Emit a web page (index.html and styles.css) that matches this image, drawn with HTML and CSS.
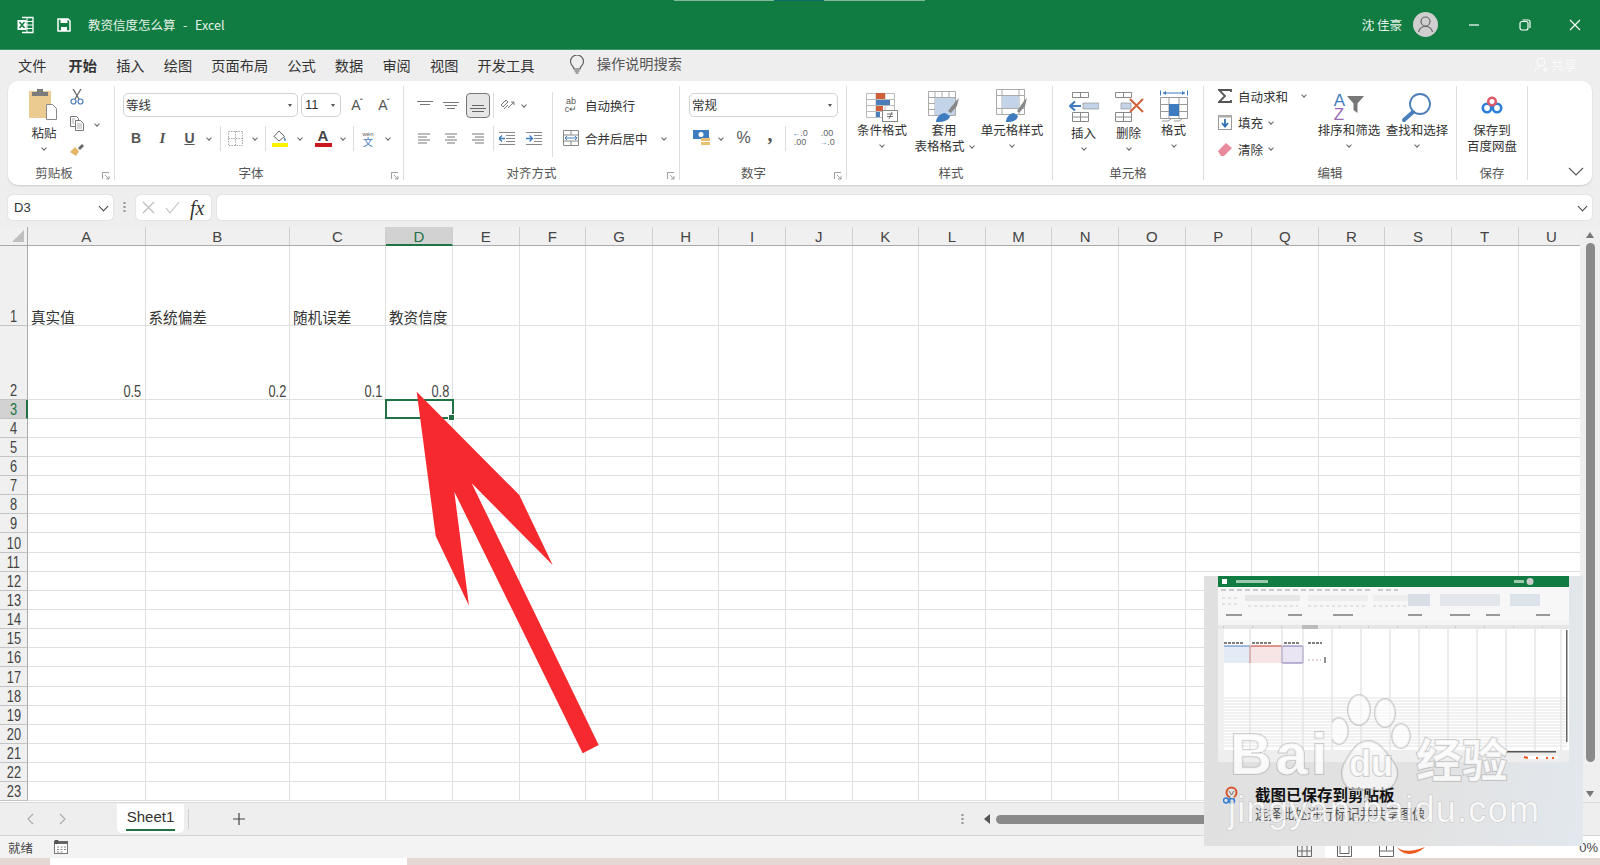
FILE: index.html
```html
<!DOCTYPE html>
<html lang="zh-CN">
<head>
    <meta charset="UTF-8">
    <title>教资信度怎么算 - Excel</title>
    <link rel="stylesheet" href="styles.css">
</head>
<body>
    <header class="titlebar">
        <svg class="logo" width="17" height="18" viewBox="0 0 17 18"><path d="M5 1.500h11v15H5" fill="none" stroke="#fff" stroke-width="1.300"/><path d="M10 1.500v15M5 5.500h11M5 9h11M5 12.500h11" stroke="#fff" stroke-width="1"/><rect x="0.500" y="4" width="9" height="10" fill="#fff"/><path d="M2.500 6l5 6M7.500 6l-5 6" stroke="#107c41" stroke-width="1.500"/></svg>
        <svg class="save" width="14" height="14" viewBox="0 0 14 14"><path d="M1 1h10l2 2v10H1z" fill="none" stroke="#fff" stroke-width="1.500"/><rect x="3.500" y="1" width="7" height="4" fill="#fff"/><rect x="4" y="9" width="6" height="4" fill="#fff"/></svg>
        <span class="doc">教资信度怎么算&nbsp; -&nbsp; Excel</span>
        <span class="top-line"><i></i></span>
        <span class="user">沈 佳豪</span>
        <span class="avatar"><svg width="25" height="25" viewBox="0 0 25 25"><circle cx="12.500" cy="9.500" r="4.500" fill="none" stroke="#666" stroke-width="1.200"/><path d="M5.500 20c1-4 4-5.500 7-5.500s6 1.500 7 5.500" fill="none" stroke="#666" stroke-width="1.200"/></svg></span>
        <span class="win win-min"><svg width="12" height="12" viewBox="0 0 12 12"><path d="M1 6h10" stroke="#fff" stroke-width="1.200"/></svg></span>
        <span class="win win-max"><svg width="12" height="12" viewBox="0 0 12 12"><rect x="1" y="2.500" width="8" height="8.500" rx="2" fill="none" stroke="#fff" stroke-width="1.200"/><path d="M3.500 1H9a2 2 0 0 1 2 2v6" fill="none" stroke="#fff" stroke-width="1.200"/></svg></span>
        <span class="win win-close"><svg width="12" height="12" viewBox="0 0 12 12"><path d="M1 1l10 10M11 1L1 11" stroke="#fff" stroke-width="1.200"/></svg></span>
    </header>

    <nav class="tabs">
        <span>文件</span>
        <span class="active">开始</span>
        <span>插入</span>
        <span>绘图</span>
        <span>页面布局</span>
        <span>公式</span>
        <span>数据</span>
        <span>审阅</span>
        <span>视图</span>
        <span>开发工具</span>
        <svg class="bulb" width="16" height="20" viewBox="0 0 16 20"><path d="M5 14c0-2.500-3.500-3.500-3.500-7.500a6.500 6.500 0 0 1 13 0C14.500 10.500 11 11.500 11 14z" fill="none" stroke="#555" stroke-width="1.100"/><path d="M5.500 16h5M6.500 18h3" stroke="#555" stroke-width="1.100"/></svg>
        <span class="search">操作说明搜索</span>
        <span class="share">
            <svg width="16" height="16" viewBox="0 0 16 16"><circle cx="7" cy="5" r="4" fill="none" stroke="#fff"/><path d="M1 15c0-4 3-5 6-5M11 10v5M8.500 12.500h5" fill="none" stroke="#fff"/></svg>
            共享
        </span>
    </nav>

    <section class="ribbon">
        <div class="group g-clip">
            <div class="gbody">
                <div class="big paste">
                    <svg width="30" height="33" viewBox="0 0 30 33"><rect y="2" width="22" height="27" rx="1" fill="#eccb90"/><path d="M3 3h16v4H3z" fill="#7c7c7c"/><rect x="8" width="6" height="4" fill="#7c7c7c"/><path d="M17.500 15.500h6l4 4v11h-10z" fill="#fff" stroke="#888"/></svg>
                    <span class="lbl">粘贴</span>
                    <i class="chev"></i>
                </div>
                <div class="stack clip-tools">
                    <div class="line">
                        <svg width="14" height="16" viewBox="0 0 14 16"><path d="M3 0l6 10M11 0L5 10" stroke="#666" stroke-width="1.300"/><circle cx="3.500" cy="12.500" r="2.500" fill="none" stroke="#4a7ebb" stroke-width="1.200"/><circle cx="10.500" cy="12.500" r="2.500" fill="none" stroke="#4a7ebb" stroke-width="1.200"/></svg>
                    </div>
                    <div class="line">
                        <svg width="14" height="15" viewBox="0 0 14 15"><path d="M.500.500h6l2 2v8H.500z" fill="#fff" stroke="#777"/><path d="M5.500 4.500h5l3 3v7h-8z" fill="#fff" stroke="#777"/><path d="M2 3h3M2 5h2M2 7h2M7 8h5M7 10h5M7 12h5" stroke="#999" stroke-width=".8"/></svg>
                        <i class="chev chev-copy"></i>
                    </div>
                    <div class="line">
                        <svg width="14" height="13" viewBox="0 0 14 13"><path d="M0 8l5-5 4 4-3 5z" fill="#e3b766"/><path d="M8 4l4-4 2 2-4 4z" fill="#666"/></svg>
                    </div>
                </div>
            </div>
            <div class="glabel">剪贴板</div>
            <svg class="launch" width="8" height="8" viewBox="0 0 8 8"><path d="M.500 7V.500H7M3 3l4 4M7 4v3H4" fill="none" stroke="#888" stroke-width=".8"/></svg>
        </div>

        <div class="group g-font">
            <div class="gbody rows">
                <div class="row">
                    <div class="combo font-name">等线<i class="caret"></i></div>
                    <div class="combo font-size">11<i class="caret"></i></div>
                    <span class="box w32 glyph">A<sup>ˆ</sup></span>
                    <span class="box w22 glyph">A<sup>ˇ</sup></span>
                </div>
                <div class="row">
                    <span class="box w26 fmt bold">B</span>
                    <span class="box w27 fmt ital">I</span>
                    <span class="box w27 fmt under">U</span>
                    <span class="box w12"><i class="chev"></i></span>
                    <span class="box w10"><i class="sep"></i></span>
                    <span class="box w20">
                        <svg width="15" height="15" viewBox="0 0 15 15"><path d="M.500.500h14v14H.500zM7.500.500v14M.500 7.500h14" fill="none" stroke="#aaa" stroke-dasharray="1.500 1"/></svg>
                    </span>
                    <span class="box w20"><i class="chev"></i></span>
                    <span class="box w1"><i class="sep"></i></span>
                    <span class="box w28">
                        <svg width="16" height="17" viewBox="0 0 16 17"><path d="M7 1l5.500 5.500L7 11 2 6.500z" fill="#fff" stroke="#666"/><path d="M12 7c1 1 2 2 2 3a1 1 0 0 1-2 0z" fill="#5b8fc9"/><rect y="13" width="16" height="4" fill="#fff200"/></svg>
                    </span>
                    <span class="box w12"><i class="chev"></i></span>
                    <span class="box w34 fontcolor">A<i></i></span>
                    <span class="box w6"><i class="chev"></i></span>
                    <span class="box w14"><i class="sep"></i></span>
                    <span class="box w16 wen"><small>wén</small>文</span>
                    <span class="box w24"><i class="chev"></i></span>
                </div>
            </div>
            <div class="glabel">字体</div>
            <svg class="launch" width="8" height="8" viewBox="0 0 8 8"><path d="M.500 7V.500H7M3 3l4 4M7 4v3H4" fill="none" stroke="#888" stroke-width=".8"/></svg>
        </div>

        <div class="group g-align">
            <div class="gbody">
                <div class="rows align-left">
                    <div class="row">
                        <span class="box w26"><svg width="16" height="9" viewBox="0 0 16 9"><path d="M0 .500h16M3 3.500h10" stroke="#777"/></svg></span>
                        <span class="box w26"><svg width="16" height="9" viewBox="0 0 16 9"><path d="M0 1.500h16M2 4.500h12M4 7.500h8" stroke="#777"/></svg></span>
                        <span class="box w24 pressed"><svg width="16" height="9" viewBox="0 0 16 9"><path d="M2 1.500h12M0 4.500h16M2 7.500h12" stroke="#666"/></svg></span>
                        <span class="box w6"><i class="sep"></i></span>
                        <span class="box w22">
                            <svg width="16" height="14" viewBox="0 0 16 14"><path d="M2 7l5-5 2 2-5 5zM5 11l4-4" fill="none" stroke="#777"/><path d="M9 10l6-6m-3 0h3v3" fill="none" stroke="#777"/></svg>
                        </span>
                        <span class="box w12"><i class="chev"></i></span>
                    </div>
                    <div class="row">
                        <span class="box w24"><svg width="12" height="11" viewBox="0 0 12 11"><path d="M0 1h12M0 4h9M0 7h12M0 10h9" stroke="#777"/></svg></span>
                        <span class="box w30"><svg width="12" height="11" viewBox="0 0 12 11"><path d="M0 1h12M2 4h8M0 7h12M2 10h8" stroke="#777"/></svg></span>
                        <span class="box w24"><svg width="12" height="11" viewBox="0 0 12 11"><path d="M0 1h12M3 4h9M0 7h12M3 10h9" stroke="#777"/></svg></span>
                        <span class="box w6"><i class="sep"></i></span>
                        <span class="box w22"><svg width="16" height="13" viewBox="0 0 16 13"><path d="M0 .500h16M7 3.500h9M7 6.500h9M7 9.500h9M0 12.500h16" stroke="#888"/><path d="M0 6.500h6M3 3.500l-3 3 3 3" fill="none" stroke="#3f7cbf" stroke-width="1.300"/></svg></span>
                        <span class="box w32"><svg width="16" height="13" viewBox="0 0 16 13"><path d="M0 .500h16M8 3.500h8M8 6.500h8M8 9.500h8M0 12.500h16" stroke="#888"/><path d="M0 6.500h6M3.500 3.500l3 3-3 3" fill="none" stroke="#3f7cbf" stroke-width="1.300"/></svg></span>
                    </div>
                </div>
                <i class="vsep"></i>
                <div class="rows align-right">
                    <div class="row">
                        <span class="box w16 wrapico">ab<br>c↵</span>
                        <span class="txt">自动换行</span>
                    </div>
                    <div class="row">
                        <span class="box w16"><svg width="16" height="16" viewBox="0 0 16 16"><path d="M.500.500h15v15H.500zM.500 5h15M.500 11h15M8 .500V5M8 11v4.500" fill="none" stroke="#888"/><path d="M2 8h12M4 6l-2 2 2 2M12 6l2 2-2 2" fill="none" stroke="#3f7cbf"/></svg></span>
                        <span class="txt">合并后居中</span>
                        <i class="chev chev-merge"></i>
                    </div>
                </div>
            </div>
            <div class="glabel">对齐方式</div>
            <svg class="launch" width="8" height="8" viewBox="0 0 8 8"><path d="M.500 7V.500H7M3 3l4 4M7 4v3H4" fill="none" stroke="#888" stroke-width=".8"/></svg>
        </div>

        <div class="group g-num">
            <div class="gbody rows">
                <div class="row">
                    <div class="combo num-format">常规<i class="caret"></i></div>
                </div>
                <div class="row">
                    <span class="box w24"><svg width="17" height="16" viewBox="0 0 17 16"><rect width="16" height="9" fill="#3f7cbf"/><circle cx="8" cy="4.500" r="2.500" fill="#fff"/><rect x="8" y="8" width="9" height="3" fill="#e9c070"/><rect x="8" y="12" width="9" height="3" fill="#e9c070"/></svg></span>
                    <span class="box w16"><i class="chev"></i></span>
                    <span class="box w29 pct">%</span>
                    <span class="box w24 comma">,</span>
                    <span class="box w6"><i class="sep"></i></span>
                    <span class="box w24 dec"><span><b>←</b>.0</span><span>.00</span></span>
                    <span class="box w30 dec"><span>.00</span><span><b>→</b>.0</span></span>
                </div>
            </div>
            <div class="glabel">数字</div>
            <svg class="launch" width="8" height="8" viewBox="0 0 8 8"><path d="M.500 7V.500H7M3 3l4 4M7 4v3H4" fill="none" stroke="#888" stroke-width=".8"/></svg>
        </div>

        <div class="group g-style">
            <div class="gbody">
                <div class="big w64">
                    <div class="bigico">
                        <svg width="32" height="29" viewBox="0 0 32 29"><path d="M.500.500h28v24H.500zM.500 6.500h28M.500 12.500h28M.500 18.500h28M10 .500v24M19 .500v24" fill="none" stroke="#bbb"/><rect x="10" width="9" height="6" fill="#d0603c"/><rect x="10" y="7" width="14" height="5" fill="#4a7ebb"/><rect x="10" y="13" width="7" height="5" fill="#d0603c"/><rect x="10" y="19" width="4" height="5" fill="#4a7ebb"/><rect x="16.500" y="17.500" width="15" height="11" fill="#fff" stroke="#888"/><path d="M21 23.500h6M21 21h6M26 19l-3 7" stroke="#555" stroke-width=".8"/></svg>
                    </div>
                    <span class="lbl">条件格式</span>
                    <i class="chev"></i>
                </div>
                <div class="big w60">
                    <div class="bigico">
                        <svg width="32" height="31" viewBox="0 0 32 31"><path d="M.500.500h27v24H.500zM.500 6.500h27M.500 12.500h27M.500 18.500h27M7 .500v24M14 .500v24M21 .500v24" fill="none" stroke="#aaa"/><rect x="7" y="7" width="20" height="17" fill="#c3d3e8"/><path d="M20 20l8-10 3-3-2 8-6 7z" fill="#888"/><path d="M8 31c0-5 5-9 9-9l5 3c-1 4-5 6-14 6z" fill="#3f7cbf"/></svg>
                    </div>
                    <span class="lbl">套用</span>
                    <span class="lbl">表格格式<i class="chev chev-in"></i></span>
                </div>
                <div class="big w76">
                    <div class="bigico">
                        <svg width="32" height="33" viewBox="0 0 32 33"><path d="M.500.500h28v25H.500zM.500 6.500h28M.500 19.500h28M6 .500v25M23 .500v25" fill="none" stroke="#aaa"/><rect x="6" y="7" width="17" height="12" fill="#c3d3e8"/><path d="M21 22l7-10 3-3-2 8-6 7z" fill="#888"/><path d="M10 33c0-5 4-9 8-9l4 3c-1 4-4 6-12 6z" fill="#3f7cbf"/></svg>
                    </div>
                    <span class="lbl">单元格样式</span>
                    <i class="chev"></i>
                </div>
            </div>
            <div class="glabel">样式</div>
        </div>

        <div class="group g-cells">
            <div class="gbody">
                <div class="big w45 low">
                    <div class="bigico">
                        <svg width="30" height="30" viewBox="0 0 30 30"><path d="M3.500.500h16v5h-16zM11.500.500v5M3.500 20.500h16v9h-16zM3.500 25h16M11.500 20.500v9" fill="none" stroke="#888"/><rect x="14" y="11" width="16" height="6" fill="#c3d3e8" stroke="#888" stroke-width=".6"/><path d="M12 14H1M6 9.500L1 14l5 4.500" fill="none" stroke="#3f7cbf" stroke-width="2.200"/></svg>
                    </div>
                    <span class="lbl">插入</span>
                    <i class="chev"></i>
                </div>
                <div class="big w45 low">
                    <div class="bigico">
                        <svg width="30" height="30" viewBox="0 0 30 30"><path d="M1.500.500h16v5h-16zM9.500.500v5M1.500 20.500h16v9h-16zM1.500 25h16M9.500 20.500v9" fill="none" stroke="#888"/><rect x="7" y="11" width="10" height="6" fill="#c3d3e8" stroke="#888" stroke-width=".6"/><path d="M16 7l13 13M29 7L16 20" stroke="#d0603c" stroke-width="2"/></svg>
                    </div>
                    <span class="lbl">删除</span>
                    <i class="chev"></i>
                </div>
                <div class="big w45">
                    <div class="bigico">
                        <svg width="28" height="32" viewBox="0 0 28 32"><path d="M3 3h22" stroke="#3f7cbf"/><path d="M3 3l3-2v4zM25 3l-3-2v4z" fill="#3f7cbf"/><path d="M.500.500v5M27.500.500v5" stroke="#3f7cbf"/><path d="M.500 7.500h27v21H.500zM9 7.500v21M19 7.500v21M.500 14.500h27M.500 21.500h27" fill="none" stroke="#999"/><rect x="9" y="14" width="10" height="12" fill="#3f7cbf"/><path d="M2 31h6l3-2M14 31h5l3-2" fill="none" stroke="#999"/></svg>
                    </div>
                    <span class="lbl">格式</span>
                    <i class="chev"></i>
                </div>
            </div>
            <div class="glabel">单元格</div>
        </div>

        <div class="group g-edit">
            <div class="gbody">
                <div class="stack edit-tools">
                    <div class="line">
                        <svg width="14" height="14" viewBox="0 0 14 14"><path d="M13 3V1H1l6 6-6 6h12v-2" fill="none" stroke="#555" stroke-width="1.800"/></svg>
                        <span class="txt">自动求和</span>
                        <i class="chev chev-sum"></i>
                    </div>
                    <div class="line">
                        <svg width="14" height="15" viewBox="0 0 14 15"><rect x=".5" y=".5" width="13" height="14" fill="#fff" stroke="#999"/><rect width="14" height="2.500" fill="#aaa"/><path d="M7 4v7M4 8l3 3.500L10 8" fill="none" stroke="#2f6fb5" stroke-width="1.800"/></svg>
                        <span class="txt">填充</span>
                        <i class="chev"></i>
                    </div>
                    <div class="line">
                        <svg width="14" height="13" viewBox="0 0 14 13"><path d="M0 8l8-8 6 5-8 8H3z" fill="#e88a9b"/></svg>
                        <span class="txt">清除</span>
                        <i class="chev"></i>
                    </div>
                </div>
                <div class="big w68">
                    <div class="bigico sortico">
                        <span class="az"><em class="az-a">A</em><em class="az-z">Z</em></span>
                        <svg width="17" height="17" viewBox="0 0 17 17"><path d="M0 0h17l-6.500 7.500V17l-4-3V7.500z" fill="#777"/></svg>
                    </div>
                    <span class="lbl">排序和筛选</span>
                    <i class="chev"></i>
                </div>
                <div class="big w68">
                    <div class="bigico">
                        <svg width="30" height="30" viewBox="0 0 30 30"><circle cx="18" cy="12" r="10" fill="none" stroke="#4a7ebb" stroke-width="1.800"/><path d="M11 20L2 28" stroke="#4a7ebb" stroke-width="4" stroke-linecap="round"/></svg>
                    </div>
                    <span class="lbl">查找和选择</span>
                    <i class="chev"></i>
                </div>
            </div>
            <div class="glabel">编辑</div>
        </div>

        <div class="group g-save">
            <div class="gbody">
                <div class="big full">
                    <div class="bigico cloud">
                        <svg width="22" height="18" viewBox="0 0 22 18"><circle cx="6" cy="12" r="4.200" fill="none" stroke="#2f7fd8" stroke-width="2.600"/><circle cx="16" cy="12" r="4.200" fill="none" stroke="#2f7fd8" stroke-width="2.600"/><circle cx="11" cy="5.500" r="3.800" fill="none" stroke="#e05a6a" stroke-width="2.600"/></svg>
                    </div>
                    <span class="lbl">保存到</span>
                    <span class="lbl">百度网盘</span>
                </div>
            </div>
            <div class="glabel">保存</div>
        </div>

        <svg class="collapse" width="16" height="9" viewBox="0 0 16 9"><path d="M1 1l7 7 7-7" fill="none" stroke="#555" stroke-width="1.100"/></svg>
    </section>

    <div class="formula">
        <div class="namebox">D3<i class="fchev"></i></div>
        <span class="dots"></span>
        <div class="fxbox">
            <svg width="13" height="13" viewBox="0 0 13 13"><path d="M1 1l11 11M12 1L1 12" stroke="#bbb" stroke-width="1.100"/></svg>
            <svg width="15" height="13" viewBox="0 0 15 13"><path d="M1 7l4 5L14 1" fill="none" stroke="#bbb" stroke-width="1.100"/></svg>
            <span class="fx">fx</span>
        </div>
        <div class="finput"><i class="fchev"></i></div>
    </div>

    <div class="sheet">
        <div class="grid">
            <div class="colhead">
                <span class="corner"><i></i></span>
                <span class="c-a">A</span><span class="c-b">B</span><span class="c-c">C</span><span class="c-d on">D</span>
                <span>E</span><span>F</span><span>G</span><span>H</span><span>I</span><span>J</span><span>K</span><span>L</span><span>M</span><span>N</span><span>O</span><span>P</span><span>Q</span><span>R</span><span>S</span><span>T</span><span>U</span>
            </div>
            <div class="row-s r1"><b><u>1</u></b><i class="c-a">真实值</i><i class="c-b">系统偏差</i><i class="c-c">随机误差</i><i class="c-d">教资信度</i><i class="rest"></i></div>
            <div class="row-s r2"><b><u>2</u></b><i class="c-a num"><u>0.5</u></i><i class="c-b num"><u>0.2</u></i><i class="c-c num"><u>0.1</u></i><i class="c-d num"><u>0.8</u></i><i class="rest"></i></div>
            <div class="row-s sel-row"><b><u>3</u></b><i class="c-a"></i><i class="c-b"></i><i class="c-c"></i><i class="c-d selected"></i><i class="rest"></i></div>
            <div class="row-s"><b><u>4</u></b><i class="c-a"></i><i class="c-b"></i><i class="c-c"></i><i class="c-d"></i><i class="rest"></i></div>
            <div class="row-s"><b><u>5</u></b><i class="c-a"></i><i class="c-b"></i><i class="c-c"></i><i class="c-d"></i><i class="rest"></i></div>
            <div class="row-s"><b><u>6</u></b><i class="c-a"></i><i class="c-b"></i><i class="c-c"></i><i class="c-d"></i><i class="rest"></i></div>
            <div class="row-s"><b><u>7</u></b><i class="c-a"></i><i class="c-b"></i><i class="c-c"></i><i class="c-d"></i><i class="rest"></i></div>
            <div class="row-s"><b><u>8</u></b><i class="c-a"></i><i class="c-b"></i><i class="c-c"></i><i class="c-d"></i><i class="rest"></i></div>
            <div class="row-s"><b><u>9</u></b><i class="c-a"></i><i class="c-b"></i><i class="c-c"></i><i class="c-d"></i><i class="rest"></i></div>
            <div class="row-s"><b><u>10</u></b><i class="c-a"></i><i class="c-b"></i><i class="c-c"></i><i class="c-d"></i><i class="rest"></i></div>
            <div class="row-s"><b><u>11</u></b><i class="c-a"></i><i class="c-b"></i><i class="c-c"></i><i class="c-d"></i><i class="rest"></i></div>
            <div class="row-s"><b><u>12</u></b><i class="c-a"></i><i class="c-b"></i><i class="c-c"></i><i class="c-d"></i><i class="rest"></i></div>
            <div class="row-s"><b><u>13</u></b><i class="c-a"></i><i class="c-b"></i><i class="c-c"></i><i class="c-d"></i><i class="rest"></i></div>
            <div class="row-s"><b><u>14</u></b><i class="c-a"></i><i class="c-b"></i><i class="c-c"></i><i class="c-d"></i><i class="rest"></i></div>
            <div class="row-s"><b><u>15</u></b><i class="c-a"></i><i class="c-b"></i><i class="c-c"></i><i class="c-d"></i><i class="rest"></i></div>
            <div class="row-s"><b><u>16</u></b><i class="c-a"></i><i class="c-b"></i><i class="c-c"></i><i class="c-d"></i><i class="rest"></i></div>
            <div class="row-s"><b><u>17</u></b><i class="c-a"></i><i class="c-b"></i><i class="c-c"></i><i class="c-d"></i><i class="rest"></i></div>
            <div class="row-s"><b><u>18</u></b><i class="c-a"></i><i class="c-b"></i><i class="c-c"></i><i class="c-d"></i><i class="rest"></i></div>
            <div class="row-s"><b><u>19</u></b><i class="c-a"></i><i class="c-b"></i><i class="c-c"></i><i class="c-d"></i><i class="rest"></i></div>
            <div class="row-s"><b><u>20</u></b><i class="c-a"></i><i class="c-b"></i><i class="c-c"></i><i class="c-d"></i><i class="rest"></i></div>
            <div class="row-s"><b><u>21</u></b><i class="c-a"></i><i class="c-b"></i><i class="c-c"></i><i class="c-d"></i><i class="rest"></i></div>
            <div class="row-s"><b><u>22</u></b><i class="c-a"></i><i class="c-b"></i><i class="c-c"></i><i class="c-d"></i><i class="rest"></i></div>
            <div class="row-s"><b><u>23</u></b><i class="c-a"></i><i class="c-b"></i><i class="c-c"></i><i class="c-d"></i><i class="rest"></i></div>
        </div>
        <div class="vscroll">
            <i class="tri-up"></i>
            <i class="thumb"></i>
            <i class="tri-down"></i>
        </div>
    </div>

    <div class="sheetbar">
        <svg class="nav" width="8" height="12" viewBox="0 0 8 12"><path d="M7 1L2 6l5 5" fill="none" stroke="#aaa" stroke-width="1.100"/></svg>
        <svg class="nav" width="8" height="12" viewBox="0 0 8 12"><path d="M1 1l5 5-5 5" fill="none" stroke="#aaa" stroke-width="1.100"/></svg>
        <div class="sheettab"><span>Sheet1</span></div>
        <i class="tabsep"></i>
        <svg class="plus" width="12" height="12" viewBox="0 0 12 12"><path d="M6 0v12M0 6h12" stroke="#444" stroke-width="1.200"/></svg>
        <span class="hdots"></span>
        <i class="tri-left"></i>
        <i class="hthumb"></i>
    </div>

    <footer class="status">
        <span class="ready">就绪</span>
        <svg width="14" height="14" viewBox="0 0 14 14"><rect x=".5" y="2.500" width="13" height="11" fill="#fff" stroke="#777"/><rect y="1" width="14" height="3" fill="#666"/><circle cx="2.500" cy="2" r="2.300" fill="#555"/><path d="M3 7h2M6.500 7h2M10 7h2M3 9.500h2M6.500 9.500h2M10 9.500h2M3 12h2M6.500 12h2" stroke="#888"/></svg>
        <div class="views">
            <span class="view view-on"><svg width="15" height="12" viewBox="0 0 15 12"><path d="M.500.500h14v11H.500zM5 .500v11M10 .500v11M.500 6h14" fill="none" stroke="#666"/></svg></span>
            <span class="view view-page"><svg width="15" height="12" viewBox="0 0 15 12"><path d="M.500.500h14v11H.500zM3 .500v8h9v-8" fill="none" stroke="#666"/></svg></span>
            <span class="view view-break"><svg width="15" height="12" viewBox="0 0 15 12"><path d="M.500.500h14v11H.500zM7.500.500v5M.500 6h14" fill="none" stroke="#666"/></svg></span>
            <svg class="swoosh" width="28" height="8" viewBox="0 0 28 8"><path d="M0 0c6 6 18 4 28 0-6 6-20 12-28 0z" fill="#ee5a1e"/></svg>
            <span class="zoom">0%</span>
        </div>
    </footer>
    <div class="strip"><i></i></div>

    <svg class="arrow" width="200" height="375" viewBox="0 0 200 375"><polygon points="6.700,6.700 109.300,110 142.700,180 61.700,98.300 188.700,360 172.700,368.300 44.300,106.700 59,220.700 25.700,151" fill="#f62a2e"/></svg>

    <aside class="toast">
        <svg class="mini" width="351" height="186" viewBox="0 0 351 186">
            <rect width="351" height="186" fill="#fff"/>
            <rect width="351" height="11" fill="#107c41"/>
            <rect x="4" y="3" width="5" height="5" fill="#fff"/>
            <rect x="18" y="4" width="32" height="3" fill="#9cc9ae"/>
            <circle cx="312" cy="5.500" r="3.500" fill="#ccc"/>
            <rect x="296" y="4" width="10" height="3" fill="#9cc9ae"/>
            <rect y="11" width="351" height="33" fill="#f7f7f7"/>
            <path d="M3 14h150M160 14h20" stroke="#bbb" stroke-width="1.500" stroke-dasharray="5 3"/>
            <rect x="27" y="19" width="55" height="6" fill="#e6e6e6"/>
            <rect x="90" y="19" width="60" height="6" fill="#eee"/>
            <rect x="155" y="19" width="35" height="6" fill="#eee"/>
            <rect x="190" y="18" width="22" height="12" fill="#d8dde6"/>
            <rect x="222" y="18" width="60" height="12" fill="#e3e6ea"/>
            <rect x="292" y="18" width="30" height="12" fill="#dde3ea"/>
            <path d="M4 22h16M4 28h16M30 30h50M90 30h60M155 30h35" stroke="#ccc" stroke-dasharray="3 3"/>
            <path d="M8 39h16M70 39h14M115 39h20M190 39h14M232 39h20M268 39h14M318 39h14" stroke="#999" stroke-width="2"/>
            <rect y="44" width="351" height="5" fill="#f4f4f4"/>
            <rect y="49" width="351" height="4" fill="#e6e6e6"/>
            <path d="M5 51h345" stroke="#aaa" stroke-dasharray="1 28"/>
            <rect x="84" y="49" width="16" height="4" fill="#bbb"/>
            <rect y="53" width="6" height="121" fill="#f0f0f0"/>
            <rect x="6" y="70" width="26" height="17" fill="#e3ebf7"/>
            <rect x="32" y="70" width="32" height="17" fill="#f7e5e5"/>
            <rect x="64" y="70" width="21" height="17" fill="#e9e5f3"/>
            <path d="M6 70h26" stroke="#4a7ebb"/><path d="M32 70h32M32 70v17" stroke="#c0392b"/><path d="M64 70h21v17h-21z" fill="none" stroke="#7a6fb0"/>
            <path d="M6 67h20M34 67h20M66 67h16M90 67h14" stroke="#555" stroke-width="1.500" stroke-dasharray="3 1"/>
            <path d="M90 84h13" stroke="#c9a9a9" stroke-dasharray="2 2"/>
            <path d="M107 81v6" stroke="#222"/>
            <path d="M32 53v121M64 53v121M85 53v121M114 53v121M143 53v121M172 53v121M201 53v121M230 53v121M259 53v121M288 53v121M317 53v121M343 53v121" stroke="#d9d9d9"/>
            <path d="M6 122h343M6 125h343M6 128h343M6 131h343M6 134h343M6 137h343M6 140h343M6 143h343M6 146h343M6 149h343M6 152h343M6 155h343M6 158h343M6 161h343M6 164h343M6 167h343M6 170h343" stroke="#e3e3e3"/>
            <rect x="348" y="54" width="1.500" height="112" fill="#666"/>
            <rect y="174" width="351" height="12" fill="#eee"/>
            <rect x="30" y="175" width="16" height="5" fill="#fff"/>
            <path d="M33 177h10" stroke="#333" stroke-width="1.500"/>
            <rect x="288" y="175" width="50" height="1.500" fill="#555"/>
            <rect x="310" y="180" width="30" height="3" fill="#fff"/>
            <path d="M306 181l4 1M318 182h2M328 182h2M334 182h2" stroke="#ee5a1e" stroke-width="2"/>
        </svg>
        <div class="toast-msg">
            <svg class="snip" width="15" height="18" viewBox="0 0 15 18"><circle cx="8.500" cy="6.500" r="5" fill="none" stroke="#d8532b" stroke-width="2"/><path d="M6 5l5 8M11 5l-5 8" stroke="#777" stroke-width="1"/><circle cx="3" cy="14.500" r="2.500" fill="none" stroke="#2f7fd8" stroke-width="1.500"/><circle cx="9" cy="15" r="2.500" fill="none" stroke="#2f7fd8" stroke-width="1.500"/></svg>
            <div>
                <div class="toast-title">截图已保存到剪贴板</div>
                <div class="toast-sub">选择此处进行标记并共享图像</div>
            </div>
        </div>
    </aside>

    <div class="watermark">
        <div class="wm-top">
            <span class="wm-bai">Bai</span>
            <span class="wm-paw">
                <svg width="80" height="100" viewBox="0 0 80 100"><g fill="rgba(255,255,255,.55)" stroke="rgba(150,150,150,.45)" stroke-width="2"><ellipse cx="27" cy="17" rx="11" ry="15"/><ellipse cx="53" cy="20" rx="10" ry="14"/><ellipse cx="7" cy="38" rx="9" ry="13"/><ellipse cx="69" cy="43" rx="9" ry="12"/><path d="M36 48c12 0 18 12 26 22 8 12 0 28-14 27-8 0-12-3-18 0-16 3-24-12-18-26 6-10 12-23 24-23z"/></g></svg>
                <span class="wm-du">du</span>
            </span>
            <span class="wm-cn">经验</span>
        </div>
        <div class="wm-url">jingyan.baidu.com</div>
    </div>
</body>
</html>
```

FILE: styles.css
```css
* {
    box-sizing: border-box;
}

body {
    margin: 0;
    width: 1600px;
    height: 865px;
    overflow: hidden;
    position: relative;
    background: #eeeeee;
    font-family: "Noto Sans CJK SC", "Noto Sans", sans-serif;
    font-size: 12.5px;
    color: #444;
}

i,
em {
    font-style: normal;
}

u {
    text-decoration: none;
}

/* title bar */
.titlebar {
    height: 50px;
    background: #107c41;
    border-bottom: 1px solid #3d9a68;
    display: flex;
    align-items: center;
    color: #e6f1ea;
    position: relative;
}

.logo {
    margin-left: 17px;
}

.save {
    margin-left: 23px;
}

.doc {
    margin-left: 17px;
    font-size: 12.5px;
    word-spacing: 1px;
}

.top-line {
    position: absolute;
    left: 674px;
    top: 0;
    width: 251px;
    height: 1px;
    background: #7fb99a;
}

.top-line i {
    display: block;
    width: 50px;
    height: 1px;
    margin-left: 100px;
    background: #0d6a6a;
}

.user {
    margin-left: auto;
    font-size: 12.5px;
}

.avatar {
    width: 25px;
    height: 25px;
    border-radius: 50%;
    background: #cfcfcf;
    margin-left: 11px;
    margin-right: 30px;
}

.win {
    display: flex;
    width: 12px;
    height: 12px;
}

.win-min {
    margin-right: 39px;
}

.win-max {
    margin-right: 38px;
}

.win-close {
    margin-right: 19px;
}

/* tab row */
.tabs {
    height: 31px;
    display: flex;
    align-items: center;
    gap: 19.2px;
    padding-left: 18px;
    padding-bottom: 2px;
    font-size: 14.2px;
    color: #333;
}

.tabs .active {
    font-weight: 700;
    margin-left: 3px;
}

.bulb {
    margin-left: 15px;
    margin-right: -7px;
}

.tabs .search {
    color: #555;
    margin-bottom: 3px;
}

.tabs .share {
    margin-left: auto;
    margin-right: 23px;
    color: #fafafa;
    display: flex;
    align-items: center;
    gap: 1px;
    font-size: 13px;
}

/* ribbon */
.ribbon {
    margin-left: 8px;
    width: 1584px;
    height: 104px;
    background: #fff;
    border-radius: 10px;
    box-shadow: 0 1px 2px rgba(0, 0, 0, 0.14);
    display: flex;
    padding: 5px 0;
    position: relative;
}

.group {
    display: flex;
    flex-direction: column;
    border-right: 1px solid #dedede;
    position: relative;
}

.g-clip { width: 107px; }
.g-font { width: 289px; padding-left: 8px; }
.g-align { width: 276px; padding-left: 8px; }
.g-num { width: 167px; padding-left: 9px; }
.g-style { width: 206px; padding-left: 3px; }
.g-cells { width: 151px; padding-left: 8px; }
.g-edit { width: 253px; padding-left: 14px; }
.g-save { width: 71px; }

.gbody {
    height: 80px;
    display: flex;
}

.glabel {
    height: 14px;
    line-height: 14px;
    margin-top: 3px;
    text-align: center;
    color: #555;
    font-size: 12.5px;
}

.g-clip .glabel { padding-right: 14px; }
.g-font .glabel { padding-right: 24px; }
.g-align .glabel { padding-right: 28px; }
.g-num .glabel { padding-right: 28px; }
.g-cells .glabel { padding-right: 8px; }
.g-edit .glabel { padding-right: 14px; }

.launch {
    position: absolute;
    right: 4px;
    bottom: 0;
}

/* two button rows */
.rows {
    flex-direction: column;
    display: flex;
    gap: 9px;
    padding-top: 7px;
}

.row {
    display: flex;
    align-items: center;
    height: 24px;
}

.box {
    display: flex;
    align-items: center;
    justify-content: center;
    height: 24px;
    flex: none;
}

.w1 { width: 1px; }
.w6 { width: 6px; }
.w10 { width: 10px; }
.w12 { width: 12px; }
.w14 { width: 14px; }
.w16 { width: 16px; }
.w20 { width: 20px; }
.w22 { width: 22px; }
.w24 { width: 24px; }
.w26 { width: 26px; }
.w27 { width: 27px; }
.w28 { width: 28px; }
.w29 { width: 29px; }
.w30 { width: 30px; }
.w32 { width: 32px; }
.w34 { width: 34px; }

.sep {
    display: block;
    width: 1px;
    height: 25px;
    background: #dcdcdc;
}

.chev {
    display: block;
    width: 4px;
    height: 4px;
    border-right: 1px solid #666;
    border-bottom: 1px solid #666;
    transform: rotate(45deg);
    flex: none;
}

.combo {
    height: 24px;
    line-height: 22px;
    border: 1px solid #d2d2d2;
    border-radius: 5px;
    padding-left: 2px;
    position: relative;
    color: #333;
    flex: none;
}

.caret {
    position: absolute;
    right: 5px;
    top: 10px;
    border-left: 2.5px solid transparent;
    border-right: 2.5px solid transparent;
    border-top: 3px solid #555;
}

.font-name {
    width: 175px;
}

.font-size {
    width: 40px;
    margin-left: 3px;
    padding-left: 3px;
    font-family: "Liberation Sans", sans-serif;
    font-size: 13px;
}

.num-format {
    width: 149px;
}

.glyph {
    font-family: "Liberation Sans", sans-serif;
    font-size: 14px;
    color: #555;
}

.glyph sup {
    font-size: 9px;
    margin-top: -6px;
    margin-left: -1px;
    color: #333;
}

.fmt {
    font-family: "Liberation Sans", sans-serif;
    font-size: 14px;
    color: #555;
}

.bold {
    font-weight: 700;
}

.ital {
    font-family: "Liberation Serif", serif;
    font-style: italic;
    font-weight: 700;
    font-size: 15px;
}

.under {
    font-weight: 700;
    text-decoration: underline;
    color: #555;
}

.fontcolor {
    flex-direction: column;
    font-family: "Liberation Sans", sans-serif;
    font-size: 15px;
    font-weight: 700;
    line-height: 14px;
    color: #444;
}

.fontcolor i {
    width: 17px;
    height: 4px;
    background: #c9181e;
}

.wen {
    flex-direction: column;
    line-height: 8px;
    font-size: 10px;
    color: #3f7cbf;
}

.wen small {
    font-family: "Liberation Sans", sans-serif;
    font-size: 6px;
    color: #555;
}

.pressed {
    margin-left: 2px;
    border: 1px solid #777;
    border-radius: 4px;
    background: #e6e6e6;
    height: 25px;
    align-items: flex-end;
    padding-bottom: 4px;
}

.align-left {
    width: 140px;
}

.vsep {
    width: 1px;
    height: 65px;
    margin-top: 6px;
    background: #dedede;
}

.align-right {
    padding-left: 10px;
}

.txt {
    margin-left: 6px;
    color: #333;
    white-space: nowrap;
}

.wrapico {
    font-family: "Liberation Sans", sans-serif;
    font-size: 9px;
    line-height: 8px;
    text-align: center;
    color: #555;
}

.chev-merge {
    margin-left: 14px;
}

.pct {
    font-family: "Liberation Sans", sans-serif;
    font-size: 16px;
    color: #555;
}

.comma {
    font-family: "Liberation Serif", serif;
    font-size: 20px;
    font-weight: 700;
    padding-bottom: 8px;
    color: #555;
}

.dec {
    flex-direction: column;
    font-family: "Liberation Sans", sans-serif;
    font-size: 9px;
    line-height: 9px;
    color: #666;
}

.dec b {
    color: #3f7cbf;
    font-size: 8px;
}

/* big buttons */
.big {
    display: flex;
    flex-direction: column;
    align-items: center;
    flex: none;
    line-height: 16px;
    color: #333;
}

.big .chev {
    margin-top: 5px;
}

.bigico {
    height: 36px;
    display: flex;
    align-items: flex-end;
}

.lbl {
    white-space: nowrap;
}

.low .lbl {
    margin-top: 3px;
}

.w45 { width: 45px; }
.w60 { width: 60px; }
.w64 { width: 64px; }
.w68 { width: 68px; }
.w76 { width: 76px; }

.big .chev-in {
    display: inline-block;
    margin: 0 0 3px 5px;
}

.paste {
    width: 46px;
    margin-left: 13px;
    padding-top: 3px;
}

.paste .lbl {
    margin-top: 3px;
}

.stack {
    display: flex;
    flex-direction: column;
    gap: 4.5px;
    flex: none;
}

.line {
    height: 22px;
    display: flex;
    align-items: center;
}

.clip-tools {
    margin-left: 3px;
}

.chev-copy {
    margin-left: 11px;
}

.edit-tools {
    width: 97px;
    margin-top: -1px;
}

.edit-tools .chev {
    margin-left: 6px;
    margin-bottom: 2px;
}

.edit-tools .chev-sum {
    margin-left: 14px;
}

.sortico {
    gap: 2px;
    height: 36px;
    padding-bottom: 1px;
}

.az {
    display: flex;
    flex-direction: column;
    font-family: "Liberation Sans", sans-serif;
    font-size: 17px;
    line-height: 14px;
    margin-bottom: -1px;
}

.az-a {
    color: #3f7cbf;
}

.az-z {
    color: #9a6ab5;
}

.sortico svg {
    margin-bottom: 8px;
}

.full {
    width: 100%;
}

.cloud {
    height: 28px;
    margin-bottom: 8px;
}

.collapse {
    position: absolute;
    right: 8px;
    bottom: 9px;
}

/* formula bar */
.formula {
    margin-top: 10px;
    margin-left: 8px;
    height: 25px;
    display: flex;
    align-items: stretch;
}

.namebox,
.fxbox,
.finput {
    background: #fff;
    border-radius: 4px;
    box-shadow: 0 0 1px rgba(0, 0, 0, 0.35);
    position: relative;
}

.namebox {
    width: 105px;
    line-height: 25px;
    padding-left: 6px;
    font-family: "Liberation Sans", sans-serif;
    font-size: 13px;
    color: #333;
}

.fchev {
    position: absolute;
    right: 6px;
    top: 8px;
    width: 7px;
    height: 7px;
    border-right: 1px solid #444;
    border-bottom: 1px solid #444;
    transform: rotate(45deg);
}

.dots {
    width: 23px;
    margin: 6px 0;
    background: radial-gradient(circle, #999 1px, transparent 1.3px) center top / 3px 4px repeat-y;
}

.fxbox {
    width: 75px;
    display: flex;
    align-items: center;
    padding-left: 6px;
    gap: 10px;
}

.fx {
    font-family: "Liberation Serif", serif;
    font-style: italic;
    font-size: 20px;
    line-height: 20px;
    color: #333;
}

.finput {
    margin-left: 6px;
    width: 1375px;
}

/* sheet */
.sheet {
    margin-top: 7px;
    height: 575px;
    display: flex;
    background: #fff;
}

.grid {
    width: 1580px;
    overflow: hidden;
}

.colhead {
    display: flex;
    height: 19px;
    background: #f0f0f0;
    border-bottom: 1px solid #a9a9a9;
    font-family: "Liberation Sans", sans-serif;
    font-size: 15px;
    line-height: 20px;
    color: #444;
}

.colhead span {
    flex: none;
    width: 66.6px;
    text-align: center;
    border-right: 1px solid #cfcfcf;
}

.colhead .corner {
    width: 28px;
    border-right: 1px solid #a9a9a9;
    padding: 3px 2px 0 0;
}

.corner i {
    display: block;
    width: 0;
    height: 0;
    margin-left: auto;
    margin-right: 1px;
    border-left: 12px solid transparent;
    border-bottom: 12px solid #bfbfbf;
}

.colhead .c-a,
.row-s .c-a {
    width: 117.5px;
}

.colhead .c-b,
.row-s .c-b {
    width: 144.5px;
}

.colhead .c-c,
.row-s .c-c {
    width: 96px;
}

.colhead .c-d,
.row-s .c-d {
    width: 67px;
}

.colhead .on {
    background: #d2d2d2;
    border-bottom: 2px solid #217346;
    height: 19px;
    color: #217346;
}

.row-s {
    display: flex;
    height: 19.15px;
    border-bottom: 1px solid #e0e0e0;
}

.row-s.r1 {
    height: 80px;
}

.row-s.r2 {
    height: 73.5px;
}

.row-s b {
    width: 28px;
    flex: none;
    align-self: stretch;
    margin-bottom: -1px;
    background: #f0f0f0;
    border-right: 1px solid #a9a9a9;
    border-bottom: 1px solid #c4c4c4;
    display: flex;
    align-items: flex-end;
    justify-content: center;
    font-family: "Liberation Sans", sans-serif;
    font-size: 16px;
    line-height: 16px;
    font-weight: 400;
    color: #444;
}

.row-s u {
    display: block;
    transform: scaleX(0.8);
}

.row-s i {
    flex: none;
    border-right: 1px solid #e0e0e0;
    display: flex;
    align-items: flex-end;
    padding: 0 3px;
    font-size: 14.6px;
    line-height: 17px;
    color: #333;
    white-space: nowrap;
}

.row-s .num {
    justify-content: flex-end;
    font-family: "Liberation Sans", sans-serif;
    font-size: 16px;
    line-height: 15px;
    color: #444;
}

.row-s .num u {
    transform-origin: right center;
}

.row-s .rest {
    flex: 1;
    border-right: 0;
    background: repeating-linear-gradient(90deg, transparent 0, transparent 65.6px, #e0e0e0 65.6px, #e0e0e0 66.6px);
}

.sel-row b {
    background: #d2d2d2;
    border-right: 2px solid #217346;
    color: #217346;
}

.row-s .selected {
    outline: 2px solid #217346;
    outline-offset: -1px;
    position: relative;
}

.selected::after {
    content: "";
    position: absolute;
    right: -3px;
    bottom: -3px;
    width: 5px;
    height: 5px;
    background: #217346;
    border: 1px solid #fff;
}

.vscroll {
    flex: 1;
    background: #efefef;
    display: flex;
    flex-direction: column;
    align-items: center;
    padding-top: 5px;
}

.tri-up {
    border-left: 4.5px solid transparent;
    border-right: 4.5px solid transparent;
    border-bottom: 6px solid #777;
}

.thumb {
    width: 9px;
    height: 519px;
    margin-top: 5px;
    margin-bottom: 29px;
    background: #8a8a8a;
    border-radius: 5px;
}

.tri-down {
    border-left: 4.5px solid transparent;
    border-right: 4.5px solid transparent;
    border-top: 6px solid #777;
}

/* sheet tabs */
.sheetbar {
    height: 33px;
    border-top: 1px solid #d9d9d9;
    display: flex;
    align-items: center;
    background: #eeeeee;
    padding-left: 26px;
}

.nav {
    margin-right: 25px;
}

.sheettab {
    width: 67px;
    height: 29px;
    margin-left: 25px;
    margin-bottom: 2px;
    background: #fff;
    border-radius: 0 0 5px 5px;
    text-align: center;
    font-family: "Liberation Sans", sans-serif;
    font-size: 15px;
    line-height: 25px;
    color: #333;
}

.sheettab span {
    display: inline-block;
    padding: 0 1px 1px;
    height: 27px;
    border-bottom: 2px solid #217346;
}

.tabsep {
    width: 1px;
    height: 20px;
    margin-left: 4px;
    background: #cfcfcf;
}

.plus {
    margin-left: 44px;
}

.hdots {
    width: 3px;
    height: 12px;
    margin-left: 716px;
    background: radial-gradient(circle, #999 1px, transparent 1.3px) 0 0 / 3px 4px repeat-y;
}

.tri-left {
    margin-left: 20px;
    border-top: 5px solid transparent;
    border-bottom: 5px solid transparent;
    border-right: 6px solid #555;
}

.hthumb {
    width: 240px;
    height: 9px;
    margin-left: 6px;
    border-radius: 5px;
    background: #8a8a8a;
}

/* status bar */
.status {
    height: 23px;
    background: #f3f3f3;
    border-top: 1px solid #d4d4d4;
    display: flex;
    align-items: center;
    padding-left: 8px;
    color: #444;
}

.ready {
    margin-right: 21px;
}

.views {
    margin-left: auto;
    width: 275px;
    height: 100%;
    background: #fff;
    display: flex;
    align-items: center;
    padding-top: 8px;
}

.view {
    display: flex;
    justify-content: center;
}

.view-on {
    margin-left: -42px;
    width: 42px;
}

.view-page {
    margin-left: 12px;
}

.view-break {
    margin-left: 27px;
}

.swoosh {
    margin-left: 3px;
}

.views .zoom {
    margin-left: auto;
    margin-right: 2px;
    padding-bottom: 8px;
    font-family: "Liberation Sans", sans-serif;
    font-size: 13px;
}

.strip {
    height: 7px;
    background: #e5d8d3;
}

.strip i {
    display: block;
    margin-left: 50px;
    width: 357px;
    height: 7px;
    background: #fff;
}

/* things that sit on top of the window */
.arrow {
    position: absolute;
    left: 410px;
    top: 385px;
}

.toast {
    position: absolute;
    left: 1204px;
    top: 576px;
    width: 379px;
    height: 270px;
    padding-left: 14px;
    background: linear-gradient(100deg, #e0e0e0, #e2e2e2 60%, #e2e8ee);
}

.mini {
    display: block;
}

.toast-msg {
    display: flex;
    gap: 17px;
    margin-top: 22px;
    margin-left: 5px;
}

.snip {
    margin-top: 2px;
}

.toast-title {
    font-size: 15.5px;
    line-height: 20px;
    font-weight: 700;
    color: #111;
}

.toast-sub {
    font-size: 13.1px;
    line-height: 20px;
    color: #555;
}

.watermark {
    position: absolute;
    left: 1228px;
    top: 687px;
    width: 290px;
    color: rgba(255, 255, 255, 0.78);
    -webkit-text-stroke: 2px rgba(150, 150, 150, 0.42);
    paint-order: stroke fill;
}

.wm-top {
    display: flex;
    align-items: flex-end;
    height: 100px;
}

.wm-bai {
    font-family: "Liberation Sans", sans-serif;
    font-weight: 700;
    font-size: 58px;
    line-height: 66px;
    width: 102px;
    margin-left: 2px;
    letter-spacing: 3.5px;
}

.wm-paw {
    position: relative;
    width: 84px;
    height: 100px;
    margin-bottom: -6px;
}

.wm-du {
    position: absolute;
    left: 17px;
    bottom: 10px;
    font-family: "Liberation Sans", sans-serif;
    font-weight: 700;
    font-size: 36px;
    line-height: 38px;
}

.wm-cn {
    font-size: 46px;
    line-height: 60px;
    font-weight: 700;
}

.wm-url {
    margin-top: 3px;
    font-family: "Liberation Sans", sans-serif;
    font-size: 36px;
    line-height: 40px;
    letter-spacing: 1.3px;
    white-space: nowrap;
    -webkit-text-stroke: 1px rgba(150, 150, 150, 0.42);
}
```
